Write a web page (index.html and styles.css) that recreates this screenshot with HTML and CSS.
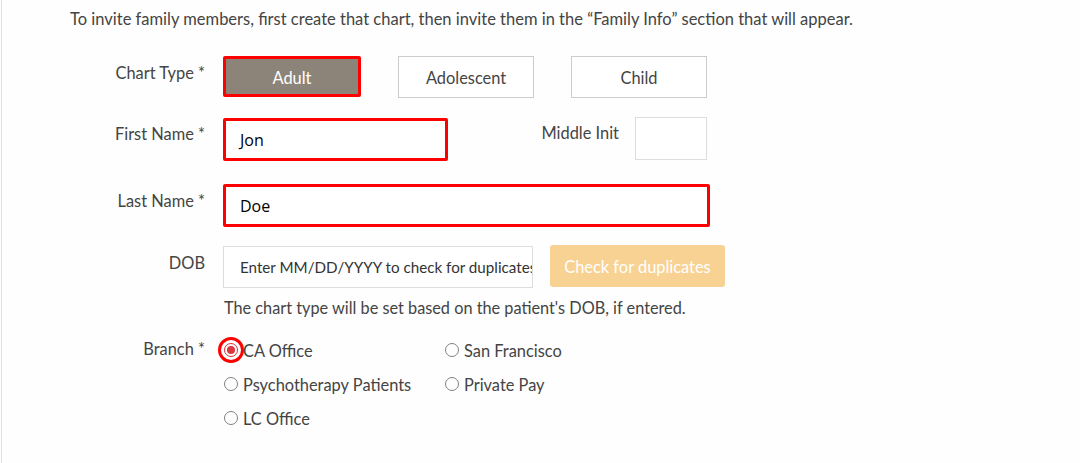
FILE: index.html
```html
<!DOCTYPE html>
<html>
<head>
<meta charset="utf-8">
<link rel="stylesheet" href="styles.css">
</head>
<body>
<div class="page">
  <p class="intro">To invite family members, first create that chart, then invite them in the “Family Info” section that will appear.</p>
  <div class="form">
    <div class="row row-chart">
      <div class="label">Chart Type *</div>
      <div class="field seg">
        <div class="seg-btn active">Adult</div>
        <div class="seg-btn">Adolescent</div>
        <div class="seg-btn">Child</div>
      </div>
    </div>
    <div class="row row-first">
      <div class="label">First Name *</div>
      <div class="field first-field">
        <div class="input error first">Jon</div>
        <div class="mid-label">Middle Init</div>
        <div class="input mid"></div>
      </div>
    </div>
    <div class="row row-last">
      <div class="label">Last Name *</div>
      <div class="field">
        <div class="input error last">Doe</div>
      </div>
    </div>
    <div class="row row-dob">
      <div class="label">DOB</div>
      <div class="field dob-field">
        <div class="input dob"><span class="placeholder">Enter MM/DD/YYYY to check for duplicates</span></div>
        <div class="dup-btn">Check for duplicates</div>
      </div>
    </div>
    <div class="row row-help">
      <div class="label"></div>
      <div class="field help">The chart type will be set based on the patient's DOB, if entered.</div>
    </div>
    <div class="row row-branch">
      <div class="label">Branch *</div>
      <div class="field radios">
        <div class="radio-item"><span class="radio checked"></span><span>CA Office</span></div>
        <div class="radio-item"><span class="radio"></span><span>San Francisco</span></div>
        <div class="radio-item"><span class="radio"></span><span>Psychotherapy Patients</span></div>
        <div class="radio-item"><span class="radio"></span><span>Private Pay</span></div>
        <div class="radio-item"><span class="radio"></span><span>LC Office</span></div>
      </div>
    </div>
  </div>
</div>
</body>
</html>
```

FILE: styles.css
```css
html, body {
  margin: 0;
  padding: 0;
  background: #fefefe;
}
body {
  font-family: "Lato", "Liberation Sans", sans-serif;
  color: #444;
  font-size: 16.4px;
}
.page {
  width: 1080px;
  height: 463px;
  box-sizing: border-box;
  border-left: 1px solid #e2dfdb;
  margin-left: 1px;
  overflow: hidden;
}
.intro {
  margin: 0;
  padding: 9px 0 0 68px;
  line-height: 20px;
  font-size: 16.5px;
}
.form {
  margin-top: 27px;
}
.row {
  display: grid;
  grid-template-columns: 203px 1fr;
  column-gap: 18px;
}
.label {
  text-align: right;
  line-height: 20px;
  padding-top: 7px;
}
.field {
  display: flex;
  align-items: flex-start;
}
.seg {
  gap: 37px;
}
.seg-btn {
  width: 134px;
  height: 39px;
  border: 1px solid #cccccc;
  box-sizing: content-box;
  display: flex;
  align-items: center;
  justify-content: center;
  font-size: 16.4px;
  color: #444;
  background: #fff;
  padding-top: 1px;
}
.seg-btn.active {
  width: 132px;
  height: 34px;
  border: 3px solid #ff0000;
  border-radius: 2px;
  background: #8c8479;
  color: #fff;
}
.row-first {
  margin-top: 19px;
}
.input {
  box-sizing: border-box;
  height: 43px;
  border: 1px solid #dddddd;
  background: #fff;
  font-family: "Open Sans", "Liberation Sans", sans-serif;
  font-size: 16px;
  color: #000;
  display: flex;
  align-items: center;
  padding-left: 16px;
}
.input.error {
  border: 3px solid #ff0000;
  border-radius: 2px;
  padding-left: 14px;
}
.first {
  width: 225px;
  margin-top: 1px;
}
.mid-label {
  width: 171px;
  text-align: right;
  line-height: 20px;
  padding-top: 6px;
  margin-right: 16px;
}
.mid {
  width: 72px;
  height: 43px;
}
.row-last {
  margin-top: 23px;
}
.last {
  width: 487px;
}
.row-dob {
  margin-top: 18px;
}
.row-dob .label {
  padding-top: 8px;
}
.dob-field {
  gap: 17px;
}
.dob {
  width: 310px;
  height: 42px;
  margin-top: 1px;
  overflow: hidden;
  white-space: nowrap;
  font-family: "Lato", "Liberation Sans", sans-serif;
  font-size: 15.2px;
}
.placeholder {
  color: #333;
}
.dup-btn {
  width: 175px;
  height: 42px;
  background: #f8d293;
  border-radius: 3px;
  color: #fff;
  font-size: 16.4px;
  display: flex;
  align-items: center;
  justify-content: center;
}
.row-help {
  margin-top: 9px;
}
.help {
  line-height: 22px;
  padding-left: 1px;
  font-size: 16.3px;
}
.row-branch {
  margin-top: 20px;
}
.row-branch .label {
  padding-top: 0;
}
.radios {
  display: grid;
  grid-template-columns: 221px 221px;
  row-gap: 12px;
  padding-top: 0;
}
.radio-item {
  display: flex;
  align-items: center;
  gap: 5px;
  height: 22px;
  padding-left: 1px;
}
.radio {
  width: 14px;
  height: 14px;
  border: 1px solid #808080;
  border-radius: 50%;
  box-sizing: border-box;
  background: #fff;
  flex: none;
  position: relative;
}
.radio.checked {
  border-color: #d6313c;
  outline: 3px solid #ff0000;
  outline-offset: 3px;
}
.radio.checked::after {
  content: "";
  position: absolute;
  left: 2px;
  top: 2px;
  width: 8px;
  height: 8px;
  border-radius: 50%;
  background: #d9363e;
}
```
